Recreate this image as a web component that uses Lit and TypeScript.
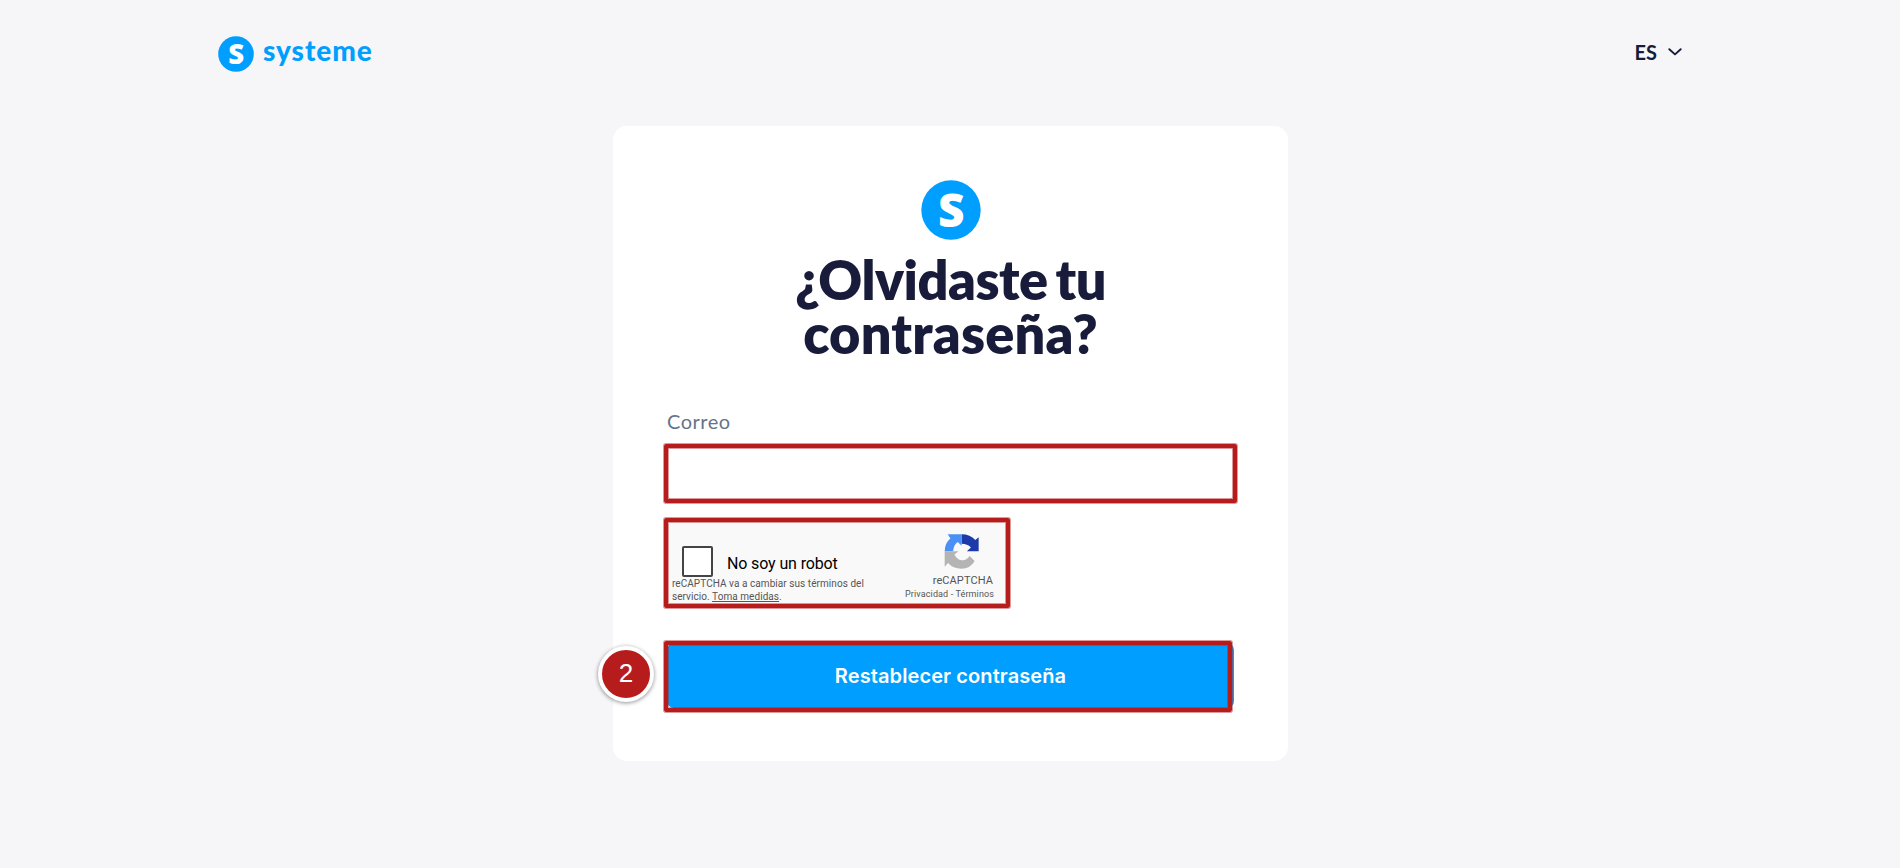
import { css, html, LitElement } from "lit";
import { customElement, property } from "lit/decorators.js";

@customElement("systeme-logo")
export class SystemeLogo extends LitElement {
  render() {
    return html`
      <svg viewBox="0 0 60 60">
        <circle cx="30" cy="30" r="29.7" fill="#009fff" />
        <text x="30.2" y="46.8" text-anchor="middle">S</text>
      </svg>
    `;
  }

  static styles = css`
    :host {
      display: block;
    }

    svg {
      display: block;
      width: 100%;
      height: 100%;
      overflow: visible;
    }

    text {
      font-family: "Open Sans", sans-serif;
      font-size: 46px;
      font-weight: 800;
      fill: #fff;
    }
  `;
}

@customElement("captcha-box")
export class CaptchaBox extends LitElement {
  render() {
    return html`
      <div class="main">
        <div class="check">
          <span class="checkbox"></span>
          <span class="label">No soy un robot</span>
        </div>
        <div class="notice">
          reCAPTCHA va a cambiar sus términos del<br />servicio.
          <span class="link">Toma medidas</span>.
        </div>
      </div>
      <div class="brand">
        <svg class="icon" viewBox="20 18 104 104">
          <path
            fill="#1c3aa9"
            d="M72 19Q98 19 113 36L123 28V69H88L100 58Q90 47 72 47Z"
          />
          <path
            fill="#4a90f5"
            d="M31 19H72V53L61 42Q49 49 47 69H22Q22 45 39 31Z"
          />
          <path
            fill="#b4b4b4"
            d="M22 69H63L51 79Q60 97 76 96Q88 95 96 83L111 98Q98 121 72 121Q47 121 32 104L22 115Z"
          />
        </svg>
        <div class="name">reCAPTCHA</div>
        <div class="terms">Privacidad - Términos</div>
      </div>
    `;
  }

  static styles = css`
    :host {
      display: flex;
      justify-content: space-between;
      width: 339px;
      height: 87px;
      box-sizing: border-box;
      background: #f9f9f9;
      font-family: Roboto, sans-serif;
      color: #555;
      white-space: nowrap;
    }

    .main {
      padding: 27px 0 0 5px;
    }

    .check {
      display: flex;
      align-items: center;
      gap: 14px;
      height: 31px;
      padding-left: 10px;
    }

    .checkbox {
      width: 31px;
      height: 31px;
      box-sizing: border-box;
      border: 2px solid #444;
      border-radius: 2px;
      background: #fff;
    }

    .label {
      padding-top: 4px;
      color: #000;
      font-size: 16px;
      letter-spacing: -0.13px;
    }

    .notice {
      font-size: 10px;
      line-height: 13px;
      letter-spacing: 0.06px;
    }

    .link {
      text-decoration: underline;
    }

    .brand {
      display: flex;
      flex-direction: column;
      align-items: flex-end;
      padding: 15px 12px 0 0;
    }

    .icon {
      width: 35px;
      height: 35px;
      margin-right: 15px;
    }

    .name {
      margin: 5px 1px 0 0;
      font-size: 11px;
      line-height: 13px;
      letter-spacing: 0.1px;
    }

    .terms {
      margin-top: 1px;
      font-size: 9px;
      line-height: 12px;
      letter-spacing: 0.12px;
    }
  `;
}

@customElement("step-badge")
export class StepBadge extends LitElement {
  @property({ type: String }) label = "";

  render() {
    return html`${this.label}`;
  }

  static styles = css`
    :host {
      display: flex;
      justify-content: center;
      align-items: center;
      width: 56px;
      height: 56px;
      box-sizing: border-box;
      padding-bottom: 3px;
      border: 4px solid #fff;
      border-radius: 50%;
      background: #b71c1c;
      box-shadow: 0 1px 4px rgba(0, 0, 0, 0.45);
      color: #fff;
      font-family: "Liberation Sans", sans-serif;
      font-size: 26px;
      line-height: 1;
    }
  `;
}

@customElement("app-root")
export class AppRoot extends LitElement {
  render() {
    return html`
      <header class="header">
        <div class="brand">
          <systeme-logo class="brand-icon"></systeme-logo>
          <span class="brand-name">systeme</span>
        </div>
        <div class="language">
          ES
          <svg class="chevron" viewBox="0 0 14 8">
            <path d="M1.3 1.2L7 6.4L12.7 1.2" />
          </svg>
        </div>
      </header>
      <main class="card">
        <systeme-logo class="card-icon"></systeme-logo>
        <h1 class="title">
          <span class="first">¿Olvidaste tu</span><br />contraseña?
        </h1>
        <label class="label" for="email">Correo</label>
        <div class="field">
          <input id="email" class="input" type="email" />
          <span class="frame frame-input"></span>
        </div>
        <div class="captcha">
          <captcha-box></captcha-box>
          <span class="frame frame-captcha"></span>
        </div>
        <div class="submit">
          <button class="button">Restablecer contraseña</button>
          <span class="frame frame-submit"></span>
          <step-badge class="badge" label="2"></step-badge>
        </div>
      </main>
    `;
  }

  static styles = css`
    :host {
      display: block;
      min-height: 100vh;
      background: #f6f6f8;
      color: #181c3a;
      font-family: Lato, sans-serif;
    }

    .header {
      display: flex;
      justify-content: space-between;
      height: 126px;
      box-sizing: border-box;
      padding: 36px 218px 0;
    }

    .brand {
      display: flex;
      align-items: flex-start;
      gap: 9px;
    }

    .brand-icon {
      width: 36px;
      height: 36px;
    }

    .brand-name {
      color: #009fff;
      font-size: 28px;
      font-weight: 900;
      line-height: 29px;
      letter-spacing: 0.95px;
    }

    .language {
      display: flex;
      align-items: center;
      gap: 11px;
      height: 31px;
      font-size: 20px;
      font-weight: 700;
    }

    .chevron {
      width: 14px;
      height: 8px;
      fill: none;
      stroke: #181c3a;
      stroke-width: 1.9;
      stroke-linecap: round;
      stroke-linejoin: round;
    }

    .card {
      display: flex;
      flex-direction: column;
      width: 675px;
      margin-left: 613px;
      box-sizing: border-box;
      padding: 54px 54px 53px;
      border-radius: 14px;
      background: #fff;
    }

    .card-icon {
      align-self: center;
      width: 60px;
      height: 60px;
    }

    .title {
      margin: 13px 0 48px;
      font-size: 54px;
      font-weight: 800;
      line-height: 54px;
      letter-spacing: 0.2px;
      text-align: center;
    }

    .first {
      letter-spacing: -0.5px;
      word-spacing: -4px;
    }

    .label {
      color: #64748b;
      font-size: 20px;
      line-height: 24px;
      letter-spacing: 0.5px;
    }

    .field,
    .captcha,
    .submit {
      position: relative;
    }

    .field {
      height: 56px;
      margin-top: 12px;
    }

    .input {
      display: block;
      width: 100%;
      height: 100%;
      box-sizing: border-box;
      border: 1px solid #d5dae1;
      border-radius: 7px;
      outline: none;
    }

    .captcha {
      width: 339px;
      margin-top: 18px;
    }

    .submit {
      margin-top: 37px;
    }

    .button {
      display: block;
      width: 100%;
      height: 65px;
      padding: 0;
      border: none;
      border-radius: 7px;
      background: #009fff;
      color: #fff;
      font-family: Inter, sans-serif;
      font-size: 20px;
      font-weight: 600;
      letter-spacing: 0.1px;
    }

    .frame {
      position: absolute;
      border: 4px solid #b71c1c;
      border-radius: 2px;
      box-shadow:
        0 0 0 1px rgba(183, 28, 28, 0.45),
        inset 0 0 0 1px rgba(183, 28, 28, 0.45);
      pointer-events: none;
    }

    .frame-input {
      inset: -1px -3px -2px;
    }

    .frame-captcha {
      inset: -1px -4px -2px -3px;
    }

    .frame-submit {
      inset: -2px 2px -4px -3px;
    }

    .badge {
      position: absolute;
      left: -69px;
      top: 3px;
    }
  `;
}
